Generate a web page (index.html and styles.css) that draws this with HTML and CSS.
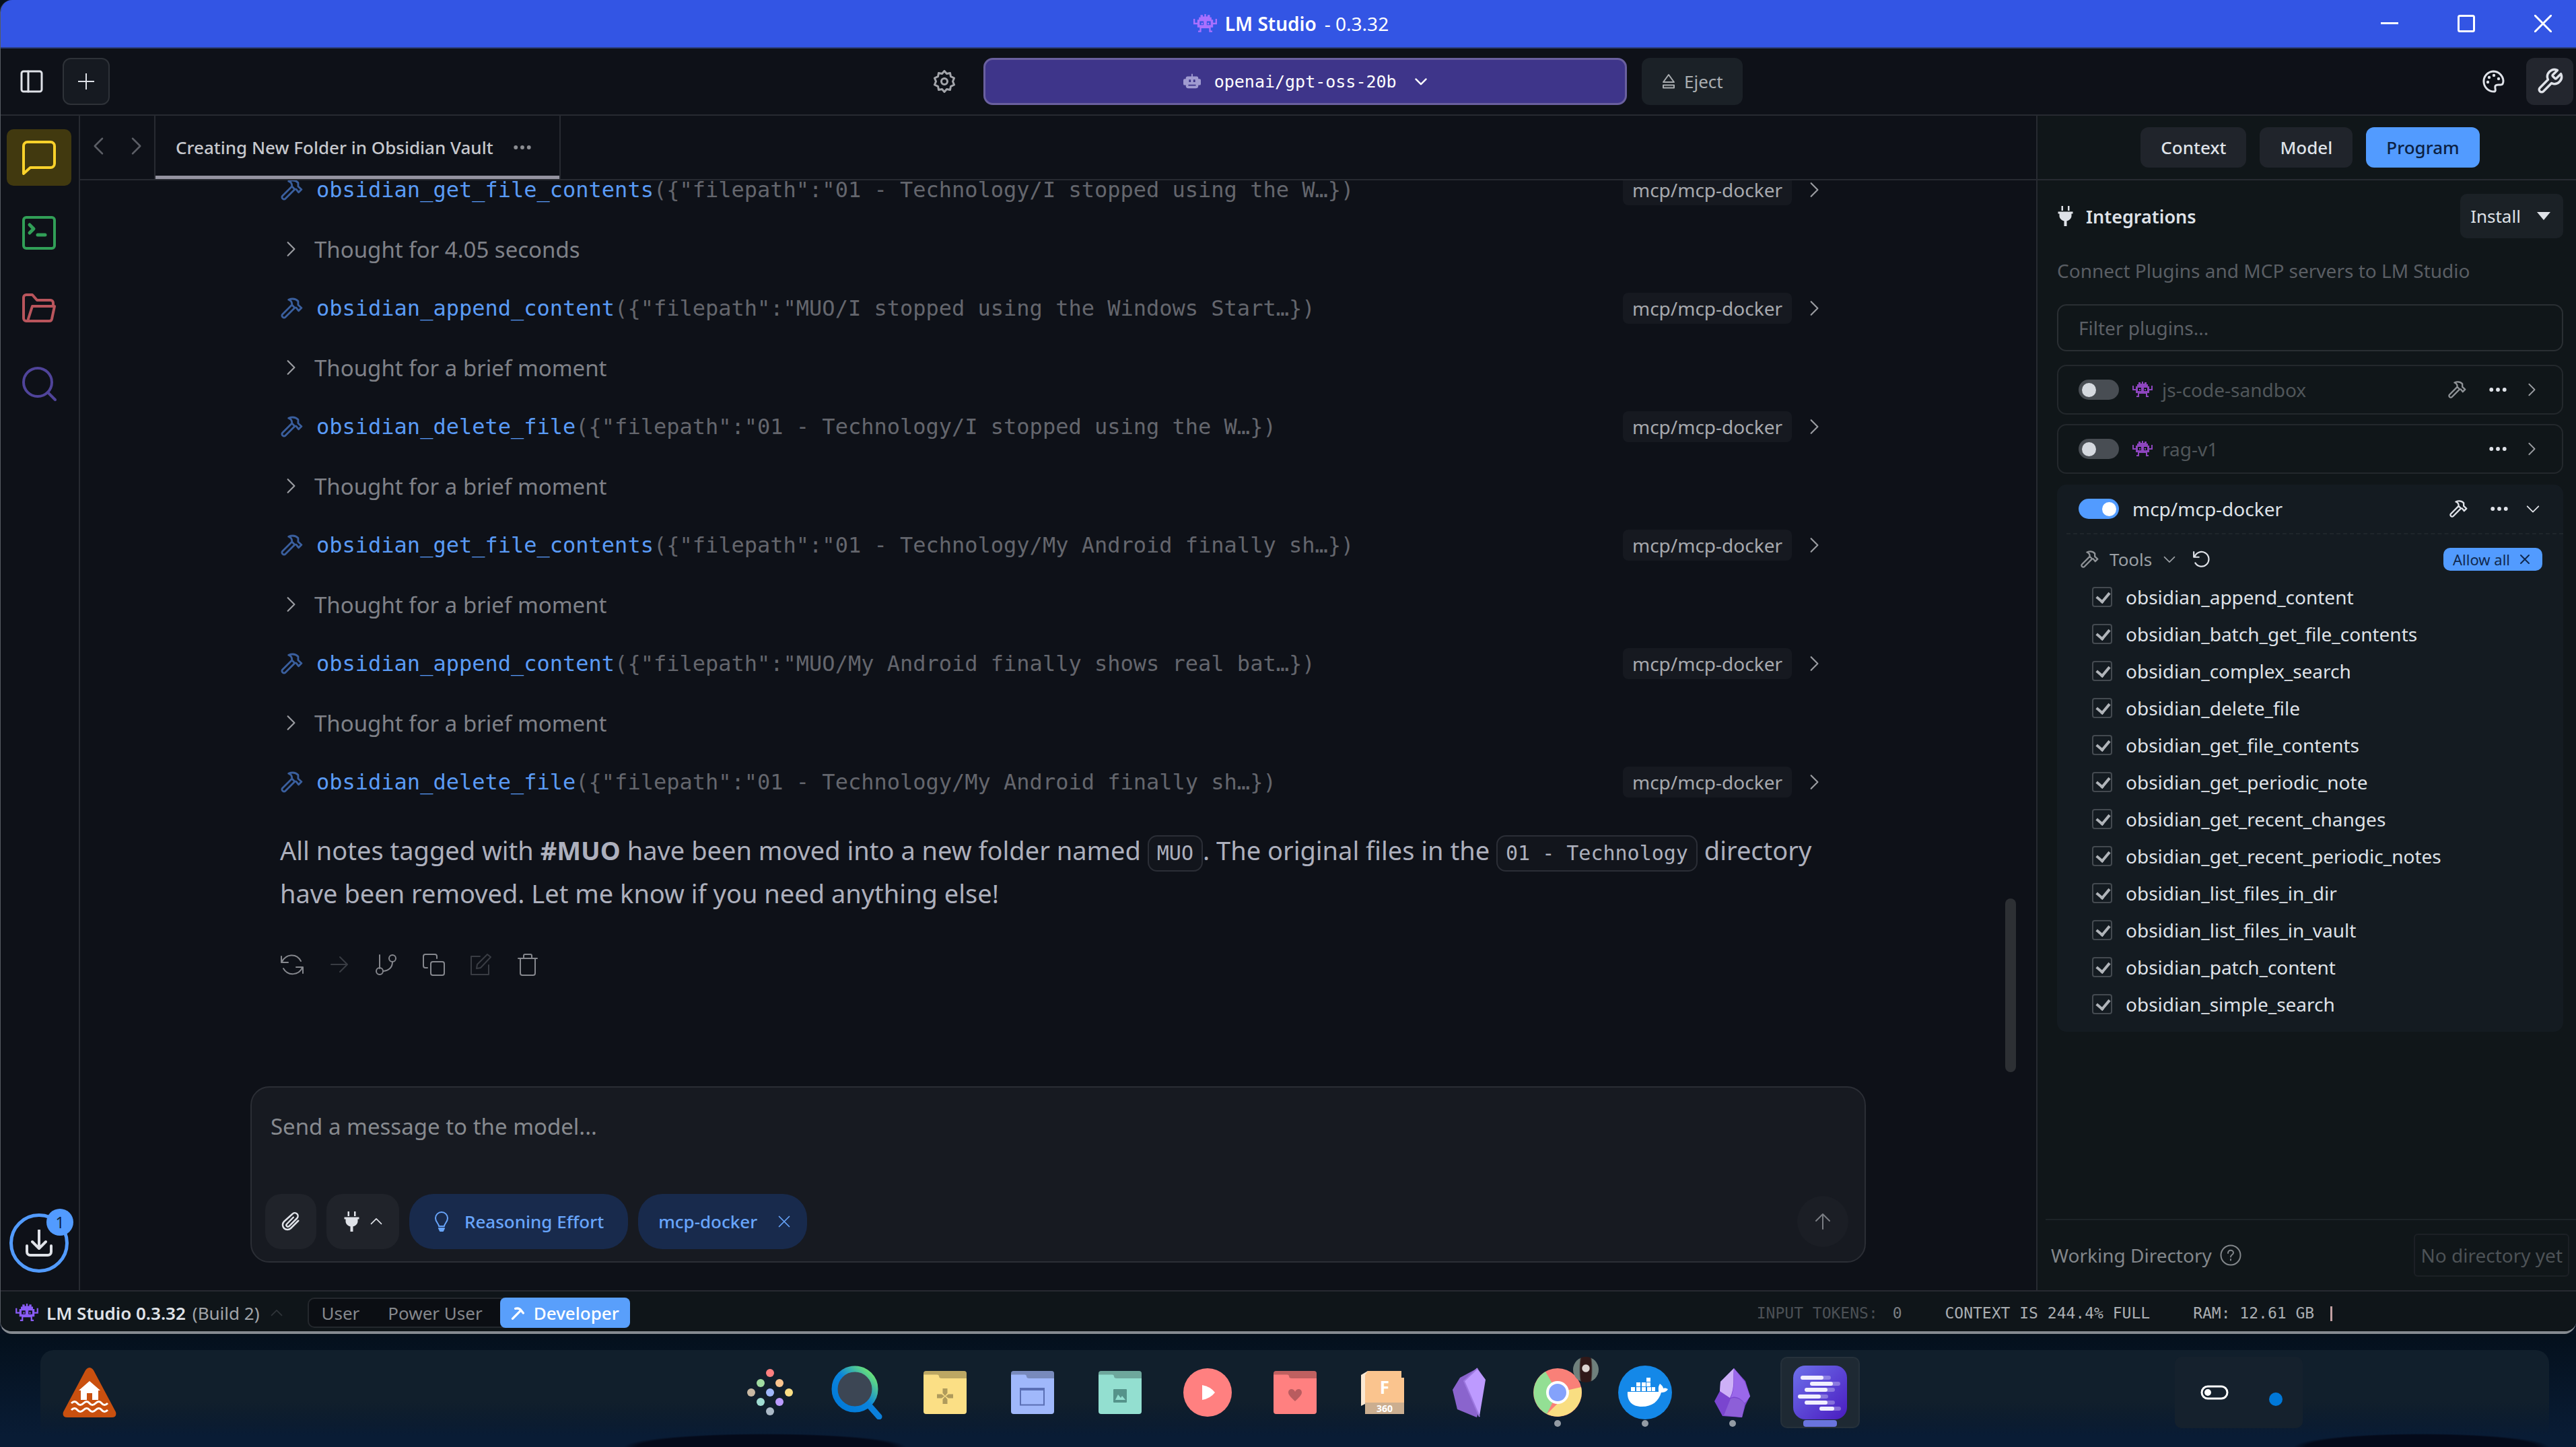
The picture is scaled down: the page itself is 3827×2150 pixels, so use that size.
FILE: index.html
```html
<!DOCTYPE html>
<html lang="en">
<head>
    <meta charset="UTF-8">
    <meta name="viewport" content="width=device-width, initial-scale=1.0">
    <title>LM Studio - 0.3.32</title>
    <link rel="stylesheet" href="styles.css">
</head>
<body>
    <!-- Icon sprite -->
    <svg class="sprite" aria-hidden="true">
        <symbol id="alien" viewBox="0 0 30 24">
            <path fill="currentColor" fill-rule="evenodd" d="M9 1H12V3H14V0H16V3H18V1H21V4H23V7H25V11H28V6H30V13H25V17H22V21H24V23H20V18H10V23H6V21H8V17H5V13H0V6H2V11H5V7H7V4H9zM8 9v5h5V9zM17 9v5h5V9zM10 11v2h2v-2zM18 11v2h2v-2z"/>
        </symbol>
        <symbol id="hammer" viewBox="0 0 24 24">
            <path d="M12.5 8.5L2.6 18.4a1.9 1.9 0 0 0 0 2.7l.3.3a1.9 1.9 0 0 0 2.7 0L15.5 11.500M9 3c4-1.600 7.500-1 10 1.600v3.900l3.500 3.200-3 3-2.600-3.300h-1.400l-3-3V7.500C12.500 5.500 11.500 4 9 3z"/>
        </symbol>
        <symbol id="chev-r" viewBox="0 0 24 24"><path d="M8 3l9 9-9 9"/></symbol>
        <symbol id="chev-l" viewBox="0 0 24 24"><path d="M16 3l-9 9 9 9"/></symbol>
        <symbol id="chev-d" viewBox="0 0 24 24"><path d="M3 8l9 9 9-9"/></symbol>
        <symbol id="chev-u" viewBox="0 0 24 24"><path d="M3 16l9-9 9 9"/></symbol>
        <symbol id="x" viewBox="0 0 24 24"><path d="M3 3l18 18M21 3L3 21"/></symbol>
        <symbol id="dots" viewBox="0 0 24 24">
            <g fill="currentColor" stroke="none"><circle cx="3" cy="12" r="2.700"/><circle cx="12" cy="12" r="2.700"/><circle cx="21" cy="12" r="2.700"/></g>
        </symbol>
        <symbol id="plug" viewBox="0 0 24 30">
            <path fill="currentColor" stroke="none" d="M6 0h2.500v7H6zM15.500 0H18v7h-2.500zM1 8.500h22v3h-2v3c0 4-3 7-7 7.800V30h-4v-7.700C6 21.500 3 18.500 3 14.500v-3H1z"/>
        </symbol>
        <symbol id="folder" viewBox="0 0 64 64">
            <rect width="64" height="64" rx="4" fill="currentColor"/>
            <path d="M4 0h56a4 4 0 0 1 4 4v7H27q-4 0-4-3T19 5.500H0V4a4 4 0 0 1 4-4z" fill="#000" opacity=".25"/>
        </symbol>
    </svg>

    <div class="window">
        <header class="titlebar">
            <h1 class="title"><svg class="icon alien"><use href="#alien"/></svg>LM Studio <span>- 0.3.32</span></h1>
            <div class="window-controls">
                <button aria-label="Minimize"><svg class="icon" viewBox="0 0 26 26"><path d="M0 12.500h26"/></svg></button>
                <button aria-label="Maximize"><svg class="icon" viewBox="0 0 26 26"><rect x="1.500" y="1.500" width="23" height="23" rx="2"/></svg></button>
                <button aria-label="Close"><svg class="icon" viewBox="0 0 26 26"><path d="M1 1l24 24M25 1L1 25"/></svg></button>
            </div>
        </header>

        <div class="toolbar">
            <div class="toolbar-left">
                <button class="plain-btn" aria-label="Toggle sidebar"><svg class="icon" viewBox="0 0 34 34"><rect x="2" y="2" width="30" height="30" rx="3"/><path d="M12 2v30"/></svg></button>
                <button class="square-btn outlined" aria-label="New chat"><svg class="icon small" viewBox="0 0 24 24"><path d="M12 0v24M0 12h24"/></svg></button>
                <button class="plain-btn settings" aria-label="Settings"><svg class="icon" viewBox="0 0 34 34"><circle cx="17" cy="17" r="4.500"/><path d="M17 1.500l3.500 4 5-1 1 5.200 5 2.300-2 5 2 5-5 2.300-1 5.200-5-1-3.500 4-3.500-4-5 1-1-5.200-5-2.300 2-5-2-5 5-2.300 1-5.200 5 1z" stroke-linejoin="round"/></svg></button>
            </div>
            <button class="model-btn">
                <svg class="robot" viewBox="0 0 28 24"><path fill="currentColor" fill-rule="evenodd" d="M13 0h2v4h6a3 3 0 0 1 3 3v1h2a2 2 0 0 1 2 2v6a2 2 0 0 1-2 2h-2v1a4 4 0 0 1-4 4H8a4 4 0 0 1-4-4v-1H2a2 2 0 0 1-2-2v-6a2 2 0 0 1 2-2h2V7a3 3 0 0 1 3-3h6zM9 9v4h3V9zM16 9v4h3V9zM8 17v2h12v-2z"/></svg>
                openai/gpt-oss-20b
                <svg class="icon tiny"><use href="#chev-d"/></svg>
            </button>
            <div class="toolbar-right">
                <button class="eject-btn"><svg class="icon" viewBox="0 0 20 24"><path d="M10 2l8 11H2zM2 17.500h16v4H2z"/></svg>Eject</button>
                <button class="plain-btn palette" aria-label="Theme"><svg class="icon" viewBox="0 0 34 34"><path d="M17 2a15 15 0 1 0 2 30c3-1 0-5 1-8s5-2 8-2 4-2 4-6A15 15 0 0 0 17 2z"/><g fill="currentColor" stroke="none"><circle cx="9" cy="18" r="2.200"/><circle cx="11" cy="11" r="2.200"/><circle cx="18" cy="8" r="2.200"/><circle cx="25" cy="13" r="2.200"/></g></svg></button>
                <button class="square-btn filled" aria-label="Developer tools"><svg class="icon" viewBox="0 0 24 24"><path d="M14.700 6.300a1 1 0 0 0 0 1.400l1.600 1.600a1 1 0 0 0 1.400 0l3.770-3.770a6 6 0 0 1-7.940 7.940l-6.910 6.910a2.120 2.120 0 0 1-3-3l6.910-6.910a6 6 0 0 1 7.940-7.940l-3.760 3.760z"/></svg></button>
            </div>
        </div>

        <div class="workspace">
            <nav class="sidebar">
                <button class="nav-btn chat active" aria-label="Chat"><svg class="icon" viewBox="0 0 52 52"><path d="M9 3h34a6 6 0 0 1 6 6v26a6 6 0 0 1-6 6H13L3 50V9a6 6 0 0 1 6-6z"/></svg></button>
                <button class="nav-btn dev" aria-label="Developer"><svg class="icon" viewBox="0 0 52 52"><rect x="3" y="3" width="46" height="46" rx="4"/><path d="M12 14l6 6-6 6M24 29h11" stroke-width="5"/></svg></button>
                <button class="nav-btn models" aria-label="My models"><svg class="icon" viewBox="0 0 52 52"><path d="M9 45l7-22h33l-4 19a4 4 0 0 1-4 3H7a4 4 0 0 1-4-4V10a4 4 0 0 1 4-4h9l7 8h20a4 4 0 0 1 4 4v5"/></svg></button>
                <button class="nav-btn discover" aria-label="Discover"><svg class="icon" viewBox="0 0 52 52"><circle cx="24" cy="24" r="21"/><path d="M39 39l11 11"/></svg></button>
                <button class="downloads" aria-label="Downloads">
                    <svg class="icon" viewBox="0 0 40 40"><path d="M20 1v26M10 18l10 10 10-10M2 24v9a5 5 0 0 0 5 5h26a5 5 0 0 0 5-5v-9"/></svg>
                    <span class="badge">1</span>
                </button>
            </nav>

            <main class="chat-area">
                <div class="tabs">
                    <div class="history">
                        <button aria-label="Back"><svg class="icon"><use href="#chev-l"/></svg></button>
                        <button aria-label="Forward"><svg class="icon"><use href="#chev-r"/></svg></button>
                    </div>
                    <div class="tab">Creating New Folder in Obsidian Vault <svg class="icon dots"><use href="#dots"/></svg></div>
                </div>

                <div class="thread">
                    <div class="messages">
                        <div class="tool-call">
                            <svg class="icon"><use href="#hammer"/></svg>
                            <code><b>obsidian_get_file_contents</b>({"filepath":"01 - Technology/I stopped using the W…})</code>
                            <span class="source">mcp/mcp-docker</span><svg class="icon chev"><use href="#chev-r"/></svg>
                        </div>
                        <div class="thought"><svg class="icon chev"><use href="#chev-r"/></svg>Thought for 4.05 seconds</div>
                        <div class="tool-call">
                            <svg class="icon"><use href="#hammer"/></svg>
                            <code><b>obsidian_append_content</b>({"filepath":"MUO/I stopped using the Windows Start…})</code>
                            <span class="source">mcp/mcp-docker</span><svg class="icon chev"><use href="#chev-r"/></svg>
                        </div>
                        <div class="thought"><svg class="icon chev"><use href="#chev-r"/></svg>Thought for a brief moment</div>
                        <div class="tool-call">
                            <svg class="icon"><use href="#hammer"/></svg>
                            <code><b>obsidian_delete_file</b>({"filepath":"01 - Technology/I stopped using the W…})</code>
                            <span class="source">mcp/mcp-docker</span><svg class="icon chev"><use href="#chev-r"/></svg>
                        </div>
                        <div class="thought"><svg class="icon chev"><use href="#chev-r"/></svg>Thought for a brief moment</div>
                        <div class="tool-call">
                            <svg class="icon"><use href="#hammer"/></svg>
                            <code><b>obsidian_get_file_contents</b>({"filepath":"01 - Technology/My Android finally sh…})</code>
                            <span class="source">mcp/mcp-docker</span><svg class="icon chev"><use href="#chev-r"/></svg>
                        </div>
                        <div class="thought"><svg class="icon chev"><use href="#chev-r"/></svg>Thought for a brief moment</div>
                        <div class="tool-call">
                            <svg class="icon"><use href="#hammer"/></svg>
                            <code><b>obsidian_append_content</b>({"filepath":"MUO/My Android finally shows real bat…})</code>
                            <span class="source">mcp/mcp-docker</span><svg class="icon chev"><use href="#chev-r"/></svg>
                        </div>
                        <div class="thought"><svg class="icon chev"><use href="#chev-r"/></svg>Thought for a brief moment</div>
                        <div class="tool-call">
                            <svg class="icon"><use href="#hammer"/></svg>
                            <code><b>obsidian_delete_file</b>({"filepath":"01 - Technology/My Android finally sh…})</code>
                            <span class="source">mcp/mcp-docker</span><svg class="icon chev"><use href="#chev-r"/></svg>
                        </div>

                        <p class="answer">All notes tagged with <strong>#MUO</strong> have been moved into a new folder named <code>MUO</code>. The original files in the <code>01 - Technology</code> directory have been removed. Let me know if you need anything else!</p>

                        <div class="actions">
                            <button aria-label="Regenerate"><svg class="icon" viewBox="0 0 36 36"><path d="M2 6v9h10M3 14C8 3 24 0 31 13M34 31v-9H24M33 23C28 34 12 36 5 24"/></svg></button>
                            <button aria-label="Continue" class="dim" disabled><svg class="icon" viewBox="0 0 36 36"><path d="M6 18h24M19 7l11 11-11 11"/></svg></button>
                            <button aria-label="Branch"><svg class="icon" viewBox="0 0 36 36"><path d="M8 4v20M27 14c0 8-5 13-14 14"/><circle cx="8" cy="28" r="5"/><circle cx="27" cy="9" r="5"/></svg></button>
                            <button aria-label="Copy"><svg class="icon" viewBox="0 0 36 36"><path d="M9 23H6a3 3 0 0 1-3-3V6a3 3 0 0 1 3-3h14a3 3 0 0 1 3 3v3"/><rect x="14" y="14" width="20" height="20" rx="3"/></svg></button>
                            <button aria-label="Edit" class="dim" disabled><svg class="icon" viewBox="0 0 36 36"><path d="M17 6H4v27h26V19M13 18L28 3l5 4-15 16-6 1z"/></svg></button>
                            <button aria-label="Delete"><svg class="icon" viewBox="0 0 36 36"><path d="M4 9h28M7 9v22a3 3 0 0 0 3 3h16a3 3 0 0 0 3-3V9M12 8V5a2 2 0 0 1 2-2h8a2 2 0 0 1 2 2v3"/></svg></button>
                        </div>
                    </div>
                    <div class="scroll-thumb"></div>
                </div>

                <form class="composer">
                    <textarea aria-label="Message" placeholder="Send a message to the model..."></textarea>
                    <div class="composer-row">
                        <button type="button" class="round-btn" aria-label="Attach file"><svg class="icon clip" viewBox="0 0 24 24"><path d="M21 11l-9 9a5.500 5.500 0 0 1-8-8L14 3a3.600 3.600 0 0 1 5.500 5L10 17.500a1.800 1.800 0 0 1-2.800-2.500L15 7"/></svg></button>
                        <button type="button" class="round-btn wide" aria-label="Integrations"><svg class="icon plug"><use href="#plug"/></svg><svg class="icon tiny"><use href="#chev-u"/></svg></button>
                        <button type="button" class="pill"><svg class="icon bulb" viewBox="0 0 24 30"><path d="M8 22c0-4-5-6-5-12a9 9 0 0 1 18 0c0 6-5 8-5 12z"/><path d="M8 25h8l-2 4h-4z" fill="currentColor"/></svg>Reasoning Effort</button>
                        <button type="button" class="pill removable">mcp-docker<svg class="icon tiny"><use href="#x"/></svg></button>
                        <button class="send" aria-label="Send"><svg class="icon" viewBox="0 0 24 24"><path d="M12 23V2M2 11l10-10 10 10"/></svg></button>
                    </div>
                </form>
            </main>

            <aside class="panel">
                <div class="panel-tabs">
                    <button>Context</button>
                    <button>Model</button>
                    <button class="active">Program</button>
                </div>
                <div class="panel-body">
                    <div class="panel-head">
                        <h2><svg class="icon plug"><use href="#plug"/></svg>Integrations</h2>
                        <button class="install">Install<svg viewBox="0 0 20 12"><path d="M0 0h20L10 12z" fill="currentColor"/></svg></button>
                    </div>
                    <p class="hint">Connect Plugins and MCP servers to LM Studio</p>
                    <input type="text" class="filter" aria-label="Filter plugins" placeholder="Filter plugins...">

                    <div class="plugin">
                        <input type="checkbox" class="toggle" id="js-code-sandbox">
                        <svg class="icon alien"><use href="#alien"/></svg>
                        <label for="js-code-sandbox">js-code-sandbox</label>
                        <svg class="icon hammer"><use href="#hammer"/></svg>
                        <svg class="icon dots"><use href="#dots"/></svg>
                        <svg class="icon chev"><use href="#chev-r"/></svg>
                    </div>
                    <div class="plugin">
                        <input type="checkbox" class="toggle" id="rag-v1">
                        <svg class="icon alien"><use href="#alien"/></svg>
                        <label for="rag-v1">rag-v1</label>
                        <svg class="icon dots"><use href="#dots"/></svg>
                        <svg class="icon chev"><use href="#chev-r"/></svg>
                    </div>

                    <div class="plugin-open">
                        <div class="plugin">
                            <input type="checkbox" class="toggle" id="mcp-docker" checked>
                            <label for="mcp-docker">mcp/mcp-docker</label>
                            <svg class="icon hammer"><use href="#hammer"/></svg>
                            <svg class="icon dots"><use href="#dots"/></svg>
                            <svg class="icon chev"><use href="#chev-d"/></svg>
                        </div>
                        <div class="tools-head">
                            <svg class="icon hammer"><use href="#hammer"/></svg>Tools<svg class="icon tiny"><use href="#chev-d"/></svg>
                            <svg class="icon reset" viewBox="0 0 24 24"><path d="M2 2v7h7M3 9a10 10 0 1 1 1 8"/></svg>
                            <button class="allow-all">Allow all<svg class="icon"><use href="#x"/></svg></button>
                        </div>
                        <ul class="tools">
                            <li><label><input type="checkbox" checked>obsidian_append_content</label></li>
                            <li><label><input type="checkbox" checked>obsidian_batch_get_file_contents</label></li>
                            <li><label><input type="checkbox" checked>obsidian_complex_search</label></li>
                            <li><label><input type="checkbox" checked>obsidian_delete_file</label></li>
                            <li><label><input type="checkbox" checked>obsidian_get_file_contents</label></li>
                            <li><label><input type="checkbox" checked>obsidian_get_periodic_note</label></li>
                            <li><label><input type="checkbox" checked>obsidian_get_recent_changes</label></li>
                            <li><label><input type="checkbox" checked>obsidian_get_recent_periodic_notes</label></li>
                            <li><label><input type="checkbox" checked>obsidian_list_files_in_dir</label></li>
                            <li><label><input type="checkbox" checked>obsidian_list_files_in_vault</label></li>
                            <li><label><input type="checkbox" checked>obsidian_patch_content</label></li>
                            <li><label><input type="checkbox" checked>obsidian_simple_search</label></li>
                        </ul>
                    </div>
                </div>
                <div class="workdir">
                    <span>Working Directory</span>
                    <svg class="icon" viewBox="0 0 32 32"><circle cx="16" cy="16" r="14.500"/><path d="M12 13c0-6 8-5 8-.500 0 3-4 2.500-4 6M16 22v1.500"/></svg>
                    <button>No directory yet</button>
                </div>
            </aside>
        </div>

        <footer class="statusbar">
            <svg class="icon alien"><use href="#alien"/></svg>
            <strong>LM Studio 0.3.32</strong>
            <span class="build">(Build 2)</span>
            <svg class="icon tiny caret"><use href="#chev-u"/></svg>
            <div class="modes">
                <button>User</button>
                <button>Power User</button>
                <button class="active"><svg class="icon" viewBox="0 0 24 24"><path d="M3 22L17 8M8 4c5-1 8 0 10 3l4 5" stroke-width="4"/></svg>Developer</button>
            </div>
            <div class="stats">
                <span class="tokens">INPUT TOKENS: <b>0</b></span>
                <span>CONTEXT IS 244.4% FULL</span>
                <span>RAM: 12.61 GB <i></i></span>
            </div>
        </footer>
    </div>

    <div class="taskbar">
        <div class="dock">
            <button class="weather" aria-label="Flood warning">
                <svg viewBox="0 0 80 74"><path d="M34 4q6-8 12 0l33 62q2 8-6 8H7q-8 0-6-8z" fill="#c9500f"/><path d="M40 20l16 14h-3v14H44V38h-8v10h-9V34h-3z" fill="#fff"/><path d="M13 53q5-5 9 0t9 0 9 0 9 0 9 0 9 0M13 63q5-5 9 0t9 0 9 0 9 0 9 0 9 0" fill="none" stroke="#fff" stroke-width="3"/></svg>
            </button>
            <div class="apps">
                <button aria-label="Start"><svg viewBox="0 0 80 80"><circle cx="40" cy="11" r="6" fill="#ff8080"/><circle cx="26" cy="26" r="6" fill="#a0dba0"/><circle cx="54" cy="26" r="6" fill="#fac48e"/><circle cx="12" cy="40" r="6" fill="#c9b9a3"/><circle cx="40" cy="40" r="6" fill="#a0b8fb"/><circle cx="68" cy="40" r="6" fill="#fbdf85"/><circle cx="26" cy="54" r="6" fill="#a0dcd2"/><circle cx="54" cy="54" r="6" fill="#bb9bff"/><circle cx="40" cy="68" r="6" fill="#abb9c7"/></svg></button>
                <button aria-label="Search"><svg viewBox="0 0 80 80">
                    <defs><linearGradient id="ring" x1="1" y1="0" x2="0" y2="1"><stop offset=".1" stop-color="#68e07a"/><stop offset=".5" stop-color="#0a84dd"/><stop offset="1" stop-color="#0078d8"/></linearGradient></defs>
                    <path d="M57 59l15 17" stroke="#0a80dd" stroke-width="9" stroke-linecap="round"/><circle cx="36" cy="35" r="30" fill="#3c4654" stroke="url(#ring)" stroke-width="9"/></svg></button>
                <button aria-label="Games folder" class="yellow"><svg class="folder" viewBox="0 0 64 64"><use href="#folder"/><path d="M28.500 26h7v7l-3.500 4-3.500-4zM28.500 49h7v-7L32 38l-3.500 4zM20 34.500h7l4 3-4 3h-7zM44 34.500h-7l-4 3 4 3h7z" fill="#000" opacity=".3"/></svg></button>
                <button aria-label="Windows folder" class="blue"><svg class="folder" viewBox="0 0 64 64"><use href="#folder"/><path d="M14 26.500h35v24H14z" fill="none" stroke="#5a6fb4" stroke-width="2"/><path d="M13 25h37v4H13z" fill="#5a6fb4"/></svg></button>
                <button aria-label="Pictures folder" class="teal"><svg class="folder" viewBox="0 0 64 64"><use href="#folder"/><rect x="22" y="27" width="20" height="20" rx="1" fill="#55938a"/><path d="M25 43l4-8 4 5 2-3 5 6z" fill="#93dfd0"/></svg></button>
                <button aria-label="Player"><svg viewBox="0 0 80 80"><circle cx="40" cy="40" r="36" fill="#ff8080"/><path d="M32 29v22q12-2 19-11-7-9-19-11z" fill="#fff"/></svg></button>
                <button aria-label="Favourites folder" class="red"><svg class="folder" viewBox="0 0 64 64"><use href="#folder"/><path d="M32 45c-5-5-10-9-10-13 0-6 8-7 10-1 2-6 10-5 10 1 0 4-5 8-10 13z" fill="#b95c5f"/></svg></button>
                <button aria-label="Fusion 360"><svg viewBox="0 0 64 64"><path d="M10 0L0 6v46l6-3z" fill="#fbe8d3"/><path d="M10 0h50v10h4v54H6V6z" fill="#fac48e"/><path d="M6 47h58v17H6z" fill="#cbae90"/><text x="35" y="34" class="f">F</text><text x="35" y="61" class="n">360</text></svg></button>
                <button aria-label="Vault"><svg viewBox="0 0 80 80"><path d="M51 4L25 18 14 36l7 29 29 12 4-12 8-45z" fill="#8a64cd"/><path d="M50 4l13 17-9 54-23-52z" fill="#bd9aff"/><path d="M51 4L31 23l23 53" fill="none" stroke="#9d78e0" stroke-width="2"/></svg></button>
                <button aria-label="Chrome" class="running"><svg viewBox="0 0 80 80"><circle cx="40" cy="40" r="36" fill="#f98078"/><path d="M40 40L22 9a36 36 0 0 0 2 63z" fill="#93df94"/><path d="M40 40h17L24 72a36 36 0 0 0 51-40z" fill="#f9de82"/><circle cx="40" cy="40" r="17" fill="#fff"/><circle cx="40" cy="40" r="13" fill="#84a2fb"/></svg><span class="avatar"></span></button>
                <button aria-label="Docker" class="running"><svg viewBox="0 0 80 80"><circle cx="40" cy="40" r="40" fill="#1488e8"/><path d="M14 39h46c0-5-1-7 2-12 3 2 5 5 5 7 3-1 5 0 7 1-2 4-6 5-10 5-4 13-13 21-29 21C20 61 13 52 14 39z" fill="#fff"/><path d="M19 32h6v6h-6zM27 32h6v6h-6zM35 32h6v6h-6zM43 32h6v6h-6zM50 32h5v6h-5zM27 25h6v6h-6zM35 25h6v6h-6zM42 25h6v6h-6zM42 18h6v6h-6z" fill="#fff"/></svg></button>
                <button aria-label="Obsidian" class="running"><svg viewBox="0 0 80 80"><path d="M42 4L22 24l-1 14-8 15 12 22 29 2 5-18 7-14-7-22z" fill="#7a45cf"/><path d="M42 4L22 24l-1 14 15 10c8-15 4-30 6-44z" fill="#cdb0f7"/><path d="M42 4l16 20 8 22-8 10c-6-8-14-12-21-8 7-13 4-30 5-44z" fill="#9a68ea"/><path d="M37 49c8-3 16 1 21 8l-4 20-27-3z" fill="#8d5fd8"/></svg></button>
                <button aria-label="LM Studio" class="running current"><svg viewBox="0 0 80 80">
                    <defs><linearGradient id="lm" x1="0" y1="0" x2="1" y2="1"><stop offset="0" stop-color="#6d70ea"/><stop offset="1" stop-color="#4a1bc0"/></linearGradient></defs>
                    <rect width="80" height="80" rx="18" fill="url(#lm)"/><g stroke="#fff" stroke-opacity=".3" stroke-width="6" stroke-linecap="round"><path d="M15 18h38M29 27h38M21 36h38M11 46h38M21 55h38M42 64h26"/></g><g stroke="#f1efff" stroke-width="6" stroke-linecap="round"><path d="M14 18h28M28 27h28M20 36h28M10 46h28M20 55h28M42 64h16"/></g></svg></button>
            </div>
            <div class="tray">
                <button aria-label="Quick toggle"><svg viewBox="0 0 42 22"><rect x="2" y="2" width="38" height="18" rx="9" fill="none" stroke="#fff" stroke-width="3"/><circle cx="11" cy="11" r="5" fill="#fff"/></svg></button>
                <span class="tray-dot"></span>
            </div>
        </div>
    </div>
</body>
</html>
```
FILE: styles.css
```css
* {
    margin: 0;
    padding: 0;
    box-sizing: border-box;
}

:root {
    --bg: #0e1118;
    --panel: #101619;
    --line: #272a31;
    --accent: #529bff;
    --text: #dfe2e8;
    --muted: #7f8188;
    --mono: "DejaVu Sans Mono", monospace;
}

body {
    font-family: "Noto Sans", "Open Sans", sans-serif;
    font-size: 26px;
    color: var(--text);
    background: #06101e;
    height: 100vh;
    display: flex;
    flex-direction: column;
    overflow: hidden;
}

button,
input,
textarea {
    font: inherit;
    color: inherit;
    background: none;
    border: none;
}

button {
    display: inline-flex;
    align-items: center;
    justify-content: center;
    flex-shrink: 0;
    white-space: nowrap;
}

svg {
    flex-shrink: 0;
}

.sprite {
    display: none;
}

.icon {
    width: 34px;
    height: 34px;
    fill: none;
    stroke: currentColor;
    stroke-width: 2;
    stroke-linecap: round;
    stroke-linejoin: round;
}

.icon.alien {
    width: 30px;
    height: 24px;
    stroke: none;
    color: #8d45bd;
}

.icon.plug {
    width: 25px;
    height: 30px;
}

.icon.tiny {
    width: 20px;
    height: 20px;
}

/* Window */
.window {
    flex: 1;
    min-height: 0;
    display: flex;
    flex-direction: column;
    background: var(--bg);
    border-left: 1px solid #565b62;
    border-bottom: 4px solid #858a90;
    border-radius: 18px 0 18px 18px;
    overflow: hidden;
}

.titlebar {
    display: grid;
    grid-template-columns: 1fr auto 1fr;
    align-items: center;
    height: 72px;
    background: #3355e4;
    border-bottom: 2px solid #2c3f80;
    color: #fff;
}

.title {
    grid-column: 2;
    display: flex;
    align-items: center;
    gap: 12px;
    padding-left: 8px;
    font-size: 28px;
    font-weight: 600;
}

.title .alien {
    color: #a970ff;
    width: 35px;
    height: 28px;
}

.title span {
    font-weight: 400;
}

.window-controls {
    display: flex;
    justify-content: flex-end;
    gap: 16px;
}

.window-controls button {
    width: 98px;
    height: 70px;
}

.window-controls .icon {
    width: 26px;
    height: 26px;
    stroke-width: 3;
}

.toolbar {
    display: grid;
    grid-template-columns: 29fr 19fr 28fr;
    align-items: center;
    height: 100px;
    border-bottom: 2px solid var(--line);
}

.toolbar-left,
.toolbar-right {
    display: flex;
    align-items: center;
}

.toolbar-left {
    gap: 14px;
    padding: 0 26px 0 14px;
}

.toolbar-right {
    padding: 0 4px 0 22px;
}

.plain-btn {
    width: 64px;
    height: 64px;
}

.plain-btn .icon {
    stroke-width: 3;
}

.settings {
    margin-left: auto;
    color: #a3a5aa;
}

.palette {
    margin-left: auto;
    margin-right: 17px;
}

.square-btn {
    width: 70px;
    height: 70px;
    border-radius: 12px;
}

.square-btn.outlined {
    background: #161a21;
    border: 2px solid #2e3238;
}

.square-btn.filled {
    background: #23262e;
}

.square-btn .icon.small {
    width: 24px;
    height: 24px;
}

.square-btn.filled .icon {
    width: 42px;
    height: 42px;
}

.model-btn {
    height: 70px;
    gap: 20px;
    font-family: var(--mono);
    font-size: 25px;
    color: #fff;
    background: #3e358a;
    border: 3px solid #6a609f;
    border-radius: 14px;
}

.model-btn .tiny {
    margin-left: 6px;
    stroke-width: 3;
}

.robot {
    width: 26px;
    height: 24px;
    color: #a09bd0;
}

.eject-btn {
    height: 70px;
    width: 150px;
    gap: 13px;
    color: #a9adb0;
    background: #1b2127;
    border-radius: 12px;
}

.eject-btn .icon {
    width: 20px;
    height: 24px;
}

/* Sidebar */
.workspace {
    flex: 1;
    min-height: 0;
    display: flex;
}

.sidebar {
    display: flex;
    flex-direction: column;
    align-items: center;
    gap: 28px;
    width: 118px;
    padding: 20px 2px 26px 0;
    border-right: 2px solid var(--line);
}

.nav-btn {
    width: 96px;
    height: 84px;
    border-radius: 10px;
}

.nav-btn .icon {
    width: 52px;
    height: 52px;
    stroke-width: 4;
}

.chat {
    color: #fbd22b;
}

.chat.active {
    background: #41390f;
}

.dev {
    color: #319f57;
}

.models {
    color: #b9555c;
}

.discover {
    color: #50449a;
}

.downloads {
    position: relative;
    margin-top: auto;
    width: 88px;
    height: 88px;
    border: 5px solid var(--accent);
    border-radius: 50%;
}

.downloads .icon {
    width: 40px;
    height: 40px;
    stroke-width: 4;
}

.badge {
    position: absolute;
    top: -12px;
    right: -12px;
    width: 40px;
    height: 40px;
    line-height: 40px;
    border-radius: 50%;
    font-size: 23px;
    color: #0e1f3b;
    background: var(--accent);
}

/* Chat */
.chat-area {
    flex: 1;
    min-width: 0;
    display: flex;
    flex-direction: column;
    align-items: center;
    padding-bottom: 41px;
}

.tabs {
    align-self: stretch;
    display: flex;
    height: 96px;
    border-bottom: 2px solid var(--line);
}

.history {
    display: flex;
    align-items: center;
    width: 110px;
    padding-bottom: 4px;
    color: #5b5e65;
}

.history button {
    flex: 1;
}

.history .icon {
    height: 30px;
}

.tab {
    display: flex;
    align-items: center;
    gap: 30px;
    padding: 0 42px 0 30px;
    font-weight: 500;
    color: #c6c8cd;
    border: solid var(--line);
    border-width: 0 2px;
    box-shadow: inset 0 -5px #9493a0;
}

.tab .dots {
    width: 26px;
    height: 26px;
    color: #8b8d92;
}

.thread {
    position: relative;
    flex: 1;
    min-height: 0;
    align-self: stretch;
    display: flex;
    flex-direction: column;
    justify-content: flex-end;
    align-items: center;
    overflow: hidden;
    padding-bottom: 161px;
}

.messages {
    width: 80%;
    max-width: 2312px;
}

.tool-call,
.thought {
    display: flex;
    align-items: center;
    height: 88px;
    color: var(--muted);
}

.tool-call {
    gap: 20px;
}

.tool-call > .icon:first-child {
    color: #3a5f9e;
}

.tool-call code {
    flex: 1;
    font-family: var(--mono);
    font-size: 32px;
    color: #64666d;
}

.tool-call b {
    font-weight: 400;
    color: #5a9bf6;
}

.source {
    padding: 0 14px;
    line-height: 46px;
    border-radius: 8px;
    font-size: 28px;
    color: #a7a9ae;
    background: #161920;
}

.icon.chev {
    width: 26px;
    height: 26px;
    color: #9b9da2;
}

.tool-call .chev {
    margin-right: 20px;
}

.thought {
    gap: 22px;
    padding-left: 3px;
    font-size: 33px;
}

.answer {
    margin-top: 25px;
    font-size: 38px;
    line-height: 64px;
    color: #adb0bd;
}

.answer code {
    display: inline-block;
    padding: 0 12px;
    line-height: 50px;
    font-family: var(--mono);
    font-size: 30px;
    border: 2px solid #2b2e36;
    border-radius: 14px;
    background: #12151c;
}

.actions {
    display: flex;
    gap: 34px;
    margin-top: 54px;
    height: 40px;
    color: #85878d;
}

.actions .icon {
    width: 36px;
    height: 36px;
}

.actions .dim {
    color: #393c43;
}

.scroll-thumb {
    position: absolute;
    right: 30px;
    bottom: 21px;
    width: 16px;
    height: 258px;
    border-radius: 8px;
    background: #2d3034;
}

.composer {
    width: 83%;
    max-width: 2400px;
    padding: 28px 24px 18px 20px;
    background: #171a21;
    border: 2px solid #2b2e35;
    border-radius: 28px;
}

.composer textarea {
    display: block;
    width: 100%;
    height: 130px;
    padding-left: 8px;
    font-size: 33px;
    line-height: 60px;
    resize: none;
    outline: none;
}

::placeholder {
    color: #878a8f;
    opacity: 1;
}

.composer-row {
    display: flex;
    align-items: center;
    gap: 15px;
}

.round-btn {
    width: 76px;
    height: 82px;
    border-radius: 24px;
    background: #20232a;
}

.round-btn.wide {
    width: 108px;
    gap: 14px;
}

.round-btn .clip {
    width: 30px;
    height: 30px;
}

.pill {
    height: 82px;
    gap: 22px;
    padding: 0 36px;
    border-radius: 36px;
    font-weight: 500;
    color: #68a5fb;
    background: #182a4c;
}

.pill .bulb {
    width: 24px;
    height: 30px;
}

.pill.removable {
    gap: 30px;
    padding: 0 24px 0 30px;
}

.send {
    width: 76px;
    height: 76px;
    margin-left: auto;
    border-radius: 50%;
    color: #7a7d83;
    background: #1b1e25;
}

.send .icon {
    width: 24px;
    height: 24px;
}

/* Right panel */
.panel {
    display: flex;
    flex-direction: column;
    width: 802px;
    border-left: 2px solid var(--line);
    background: var(--panel);
}

.panel-tabs {
    display: flex;
    align-items: center;
    justify-content: center;
    gap: 20px;
    height: 96px;
    padding-left: 10px;
    border-bottom: 2px solid var(--line);
}

.panel-tabs button {
    height: 60px;
    padding: 0 30px;
    border-radius: 12px;
    font-weight: 500;
    background: #20242b;
}

.panel-tabs .active {
    color: #0c2143;
    background: var(--accent);
}

.panel-body {
    flex: 1;
    min-height: 0;
    padding: 20px 19px 0 29px;
}

.panel-head {
    display: flex;
    align-items: center;
    justify-content: space-between;
}

.panel-head h2 {
    display: flex;
    align-items: center;
    gap: 18px;
    font-size: 27px;
    font-weight: 600;
}

.install {
    gap: 24px;
    width: 153px;
    height: 66px;
    padding-right: 4px;
    border-radius: 10px;
    background: #1b2126;
}

.install svg {
    width: 20px;
    height: 12px;
}

.hint {
    margin: 28px 0 30px;
    font-size: 28px;
    line-height: 40px;
    color: #5a5e64;
}

.filter {
    width: 100%;
    height: 70px;
    padding: 0 30px;
    font-size: 28px;
    border: 2px solid #2a2f33;
    border-radius: 14px;
}

.filter::placeholder {
    color: #5c6066;
}

.plugin {
    display: flex;
    align-items: center;
    height: 74px;
    padding: 0 34px 0 30px;
    border: 2px solid #23282c;
    border-radius: 14px;
}

.plugin label {
    flex: 1;
    font-size: 28px;
    color: #50565a;
}

.filter + .plugin {
    margin-top: 20px;
}

.plugin + .plugin {
    margin-top: 14px;
}

.plugin .alien {
    margin: 0 14px 0 20px;
}

.icon.hammer {
    width: 28px;
    height: 28px;
    color: #8f9397;
}

.plugin .dots {
    width: 26px;
    height: 26px;
    margin: 0 26px 0 34px;
}

.plugin .chev {
    width: 22px;
    height: 22px;
}

.toggle {
    appearance: none;
    width: 60px;
    height: 30px;
    border-radius: 15px;
    background: #484d53;
}

.toggle::before {
    content: "";
    display: block;
    width: 21px;
    height: 21px;
    margin: 5px;
    border-radius: 50%;
    background: #d5d9df;
}

.toggle:checked {
    background: var(--accent);
}

.toggle:checked::before {
    margin-left: 35px;
    background: #fff;
}

.plugin-open {
    margin-top: 16px;
    padding-bottom: 14px;
    border-radius: 14px;
    background: #141b21;
}

.plugin-open .plugin {
    margin-left: 14px;
    padding-left: 18px;
    border: 0;
    border-bottom: 2px dashed #1f262b;
    border-radius: 0;
}

.plugin-open .plugin label {
    margin-left: 20px;
    color: var(--text);
}

.plugin-open .plugin .hammer,
.plugin-open .plugin .chev {
    color: var(--text);
}

.tools-head {
    display: flex;
    align-items: center;
    gap: 16px;
    height: 56px;
    margin-top: 9px;
    padding: 0 31px 0 34px;
    color: #9ba0a5;
}

.tools-head .reset {
    width: 26px;
    height: 26px;
    margin-left: 8px;
    color: var(--text);
}

.allow-all {
    margin-left: auto;
    height: 34px;
    gap: 14px;
    padding: 0 18px 0 14px;
    border-radius: 10px;
    font-size: 22px;
    color: #10284e;
    background: var(--accent);
}

.allow-all .icon {
    width: 16px;
    height: 16px;
    stroke-width: 3;
}

.tools {
    list-style: none;
}

.tools label {
    display: flex;
    align-items: center;
    gap: 20px;
    height: 55px;
    padding-left: 52px;
    font-size: 28px;
}

.tools input {
    appearance: none;
    width: 30px;
    height: 30px;
    border: 2px solid #444a50;
    border-radius: 4px;
}

.tools input:checked::before {
    content: "";
    display: block;
    width: 9px;
    height: 15px;
    margin: 2px 0 0 8px;
    border: solid #b0b4b9;
    border-width: 0 4px 4px 0;
    transform: rotate(40deg);
}

.workdir {
    display: flex;
    align-items: center;
    gap: 12px;
    height: 106px;
    margin-left: 12px;
    padding: 0 10px 0 8px;
    font-size: 28px;
    border-top: 2px solid #1c2327;
    color: #83878b;
}

.workdir .icon {
    width: 32px;
    height: 32px;
}

.workdir button {
    margin-left: auto;
    height: 64px;
    padding: 0 8px;
    color: #4d5256;
    border: 2px solid #1c2025;
    border-radius: 6px;
}

/* Status bar */
.statusbar {
    display: flex;
    align-items: center;
    height: 61px;
    padding: 4px 0 0 22px;
    font-size: 26px;
    border-top: 2px solid var(--line);
    background: #0f1519;
}

.statusbar > .alien {
    margin-right: 12px;
    width: 34px;
    height: 27px;
    color: #8a5cf6;
}

.statusbar strong {
    font-weight: 600;
}

.build {
    margin-left: 10px;
    color: #a1a4a8;
}

.caret {
    margin: 0 36px 0 16px;
    color: #30353a;
}

.modes {
    display: flex;
    height: 45px;
    color: #85888d;
    border: 2px solid #24282d;
    border-radius: 10px;
    background: #0b0e13;
}

.modes button {
    padding: 0 24px 0 18px;
}

.modes .active {
    gap: 14px;
    margin: -2px;
    margin-left: 2px;
    padding: 0 16px;
    border-radius: 8px;
    font-weight: 500;
    color: #fff;
    background: #599ffb;
}

.modes .icon {
    width: 20px;
    height: 20px;
}

.stats {
    display: flex;
    gap: 64px;
    margin-left: auto;
    margin-right: 362px;
    font-family: var(--mono);
    font-size: 23px;
    color: #a9adb1;
}

.tokens {
    color: #4b5055;
}

.tokens b {
    margin-left: 8px;
    font-weight: 400;
    color: #7b7f84;
}

.stats i {
    display: inline-block;
    width: 3px;
    height: 22px;
    margin-left: 10px;
    vertical-align: middle;
    background: #c2a0a2;
}

/* Taskbar */
.taskbar {
    height: 168px;
    padding: 24px 40px 0 60px;
    background:
        radial-gradient(ellipse 210px 20px at 29.7% 100%, #040a1a 90%, transparent),
        radial-gradient(ellipse 190px 20px at 94% 100%, #040a1a 90%, transparent),
        linear-gradient(#04101c, #091c35 90%);
}

.dock {
    display: grid;
    grid-template-columns: 1fr auto 1fr;
    align-items: center;
    height: 126px;
    border-radius: 20px 20px 0 0;
    background: linear-gradient(#111f2c 60%, transparent);
}

.dock > * {
    height: 106px;
}

.weather {
    justify-self: start;
    width: 146px;
}

.weather svg {
    width: 80px;
    height: 74px;
}

.apps {
    display: flex;
}

.apps button {
    position: relative;
    width: 130px;
}

.apps svg {
    width: 80px;
    height: 80px;
}

.apps svg.folder,
.apps [viewBox="0 0 64 64"] {
    width: 64px;
    height: 64px;
}

.yellow { color: #fbdf85; }
.blue { color: #a0b8fb; }
.teal { color: #93dfd0; }
.red { color: #ff8080; }

.f,
.n {
    fill: #fff;
    font-weight: 700;
    text-anchor: middle;
}

.f {
    font-size: 26px;
}

.n {
    font-size: 14px;
}

.running::after {
    content: "";
    position: absolute;
    bottom: 2px;
    width: 10px;
    height: 10px;
    border-radius: 5px;
    background: #939ba4;
}

.apps .current {
    width: 118px;
    margin: 0 6px;
    border: 2px solid #26313b;
    border-radius: 10px;
    background: #1e2933;
}

.current::after {
    bottom: 0;
    width: 50px;
    border-radius: 4px;
    background: #6a74de;
}

.avatar {
    position: absolute;
    top: 0;
    right: 4px;
    width: 38px;
    height: 38px;
    border-radius: 50%;
    background:
        radial-gradient(circle at 50% 45%, #dcd5d2 18%, transparent 22%),
        radial-gradient(ellipse 10px 40px at 50% 50%, #301818 80%, transparent),
        #6f807c;
}

.tray {
    justify-self: end;
    display: flex;
    align-items: center;
    gap: 60px;
    margin-right: 366px;
    padding: 0 30px 0 38px;
    border-radius: 10px;
    background: #15212d;
}

.tray svg {
    width: 42px;
    height: 22px;
}

.tray-dot {
    width: 20px;
    height: 20px;
    margin-top: 20px;
    border-radius: 50%;
    background: #0078d8;
}
```
